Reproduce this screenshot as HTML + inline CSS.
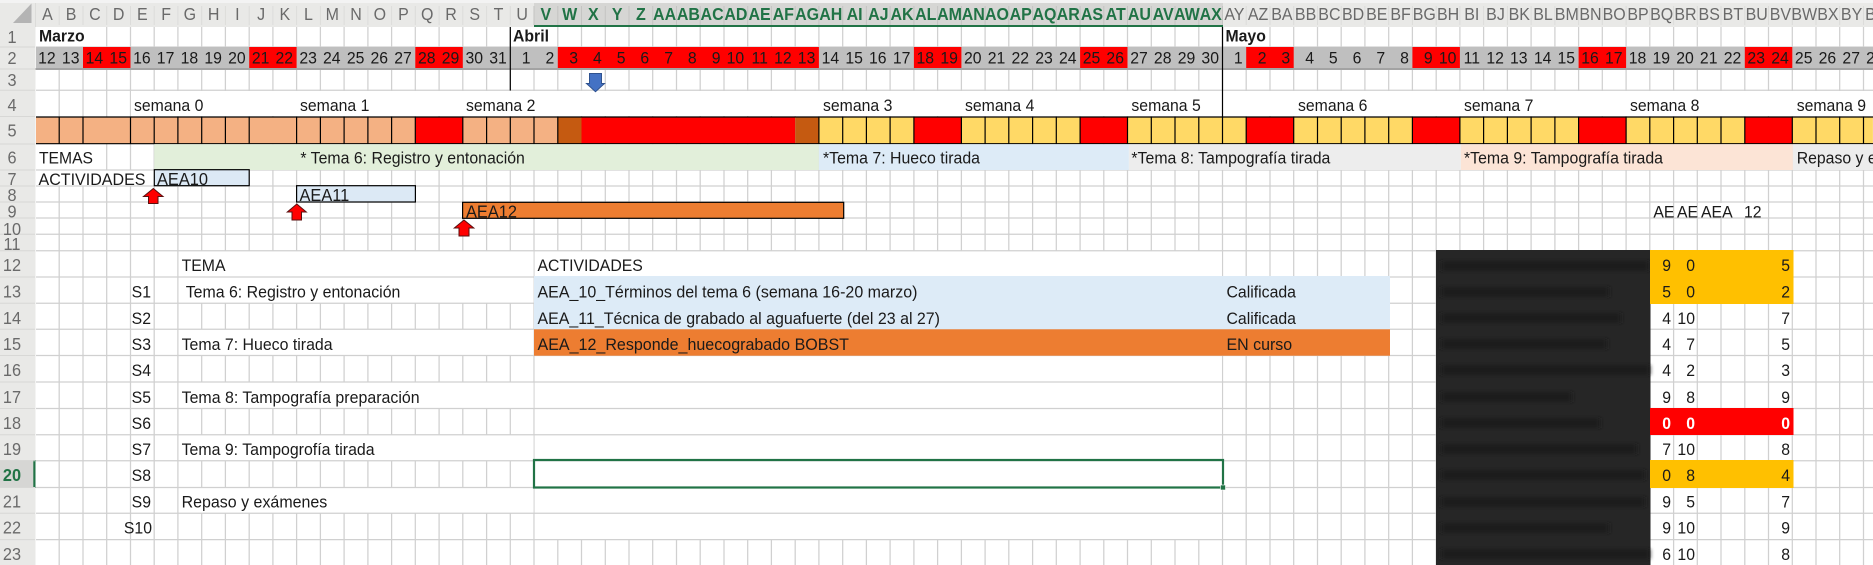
<!DOCTYPE html>
<html lang="es"><head><meta charset="utf-8"><title>Planificación</title>
<style>
html,body{margin:0;padding:0;background:#fff;width:1873px;height:565px;overflow:hidden}
svg{display:block;position:absolute;left:0;top:0}
text{font-family:"Liberation Sans",Arial,sans-serif;font-size:15.8px;fill:#1a1a1a}
.h text{font-size:16px;fill:#6a6a6a;text-anchor:middle}
.hs text{font-size:16px;fill:#217346;font-weight:bold;text-anchor:middle}
.r text{font-size:16.3px;fill:#6a6a6a;text-anchor:middle}
.e text{text-anchor:end}
</style></head><body>
<svg width="1873" height="565" viewBox="0 0 1873 565" xmlns="http://www.w3.org/2000/svg">
<defs><filter id="b" x="-10%" y="-100%" width="120%" height="300%"><feGaussianBlur stdDeviation="2 1.6"/></filter></defs>
<rect width="1873" height="565" fill="#fff"/>

<!-- grid -->
<path fill="none" stroke="#d0d0d0" stroke-width="1.25" d="M59.2 27V565M83 27V565M106.7 27V565M130.5 27V565M154.2 27V565M177.9 27V565M201.7 27V565M225.4 27V565M249.2 27V565M272.9 27V565M296.6 27V565M320.4 27V565M344.1 27V565M367.9 27V565M391.6 27V565M415.3 27V565M439.1 27V565M462.8 27V565M486.6 27V565M510.3 27V565M534 27V565M557.8 27V565M581.5 27V565M605.3 27V565M629 27V565M652.7 27V565M676.5 27V565M700.2 27V565M724 27V565M747.7 27V565M771.4 27V565M795.2 27V565M818.9 27V565M842.7 27V565M866.4 27V565M890.1 27V565M913.9 27V565M937.6 27V565M961.4 27V565M985.1 27V565M1008.8 27V565M1032.6 27V565M1056.3 27V565M1080.1 27V565M1103.8 27V565M1127.5 27V565M1151.3 27V565M1175 27V565M1198.8 27V565M1222.5 27V565M1246.2 27V565M1270 27V565M1293.7 27V565M1317.5 27V565M1341.2 27V565M1364.9 27V565M1388.7 27V565M1412.4 27V565M1436.2 27V565M1459.9 27V565M1483.6 27V565M1507.4 27V565M1531.1 27V565M1554.9 27V565M1578.6 27V565M1602.3 27V565M1626.1 27V565M1649.8 27V565M1673.6 27V565M1697.3 27V565M1721 27V565M1744.8 27V565M1768.5 27V565M1792.3 27V565M1816 27V565M1839.7 27V565M1863.5 27V565"/>

<!-- white covers for overflowing / merged cells -->
<g fill="#fff">
<rect x="36" y="27" width="70" height="20"/>
<rect x="511" y="27" width="46" height="20"/>
<rect x="1224" y="27" width="45" height="20"/>
<rect x="131" y="91" width="1742" height="25"/>
<rect x="36" y="144" width="70" height="26"/>
<rect x="36" y="170" width="118" height="16"/>
<rect x="1698" y="203" width="70" height="15"/>
<rect x="534.7" y="251" width="687.2" height="289"/>
<rect x="178.6" y="251" width="355" height="52"/>
<rect x="178.6" y="329" width="355" height="27"/>
<rect x="178.6" y="382" width="355" height="26.5"/>
<rect x="178.6" y="434.5" width="355" height="26"/>
<rect x="178.6" y="487.5" width="355" height="26"/>
</g>
<path fill="none" stroke="#d0d0d0" stroke-width="1.25" d="M36 47H1873M36 90.3H1873M36 170H1873M36 186H1873M36 202H1873M36 218H1873M36 234.3H1873M36 250.7H1873M36 277H1873M36 303.3H1873M36 329.3H1873M36 355.5H1873M36 382H1873M36 408.5H1873M36 434.7H1873M36 460.7H1873M36 487.5H1873M36 513.3H1873M36 539.6H1873"/>

<!-- row 2 band -->
<rect x="36" y="47" width="1837" height="21" fill="#bfbfbf"/>
<g fill="#f00">
<rect x="83" y="47" width="47.5" height="21"/>
<rect x="249.2" y="47" width="47.4" height="21"/>
<rect x="415.3" y="47" width="47.5" height="21"/>
<rect x="557.8" y="47" width="261.1" height="21"/>
<rect x="913.9" y="47" width="47.5" height="21"/>
<rect x="1080.1" y="47" width="47.4" height="21"/>
<rect x="1246.2" y="47" width="47.5" height="21"/>
<rect x="1412.4" y="47" width="47.5" height="21"/>
<rect x="1578.6" y="47" width="47.5" height="21"/>
<rect x="1744.8" y="47" width="47.5" height="21"/>
</g>
<rect x="0" y="68" width="1873" height="2" fill="#a3a3a3"/>

<!-- row 5 -->
<rect x="36" y="117" width="379.3" height="27" fill="#f4b183"/>
<rect x="415.3" y="117" width="47.5" height="27" fill="#f00"/>
<rect x="462.8" y="117" width="95" height="27" fill="#f4b183"/>
<rect x="557.8" y="117" width="23.7" height="27" fill="#c55a11"/>
<rect x="581.5" y="117" width="213.7" height="27" fill="#f00"/>
<rect x="795.2" y="117" width="23.7" height="27" fill="#c55a11"/>
<rect x="818.9" y="117" width="1054" height="27" fill="#ffd966"/>
<g fill="#f00">
<rect x="913.9" y="117" width="47.5" height="27"/>
<rect x="1080.1" y="117" width="47.4" height="27"/>
<rect x="1246.2" y="117" width="47.5" height="27"/>
<rect x="1412.4" y="117" width="47.5" height="27"/>
<rect x="1578.6" y="117" width="47.5" height="27"/>
<rect x="1744.8" y="117" width="47.5" height="27"/>
</g>
<path fill="none" stroke="#000" stroke-width="1.2" d="M36 117H1873M36 143.7H1873M59.2 117V144M83 117V144M130.5 117V144M154.2 117V144M177.9 117V144M201.7 117V144M225.4 117V144M249.2 117V144M296.6 117V144M320.4 117V144M344.1 117V144M367.9 117V144M391.6 117V144M415.3 117V144M462.8 117V144M486.6 117V144M510.3 117V144M534 117V144M557.8 117V144M818.9 117V144M842.7 117V144M866.4 117V144M890.1 117V144M913.9 117V144M961.4 117V144M985.1 117V144M1008.8 117V144M1032.6 117V144M1056.3 117V144M1080.1 117V144M1127.5 117V144M1151.3 117V144M1175 117V144M1198.8 117V144M1222.5 117V144M1246.2 117V144M1293.7 117V144M1317.5 117V144M1341.2 117V144M1364.9 117V144M1388.7 117V144M1412.4 117V144M1459.9 117V144M1483.6 117V144M1507.4 117V144M1531.1 117V144M1554.9 117V144M1578.6 117V144M1626.1 117V144M1649.8 117V144M1673.6 117V144M1697.3 117V144M1721 117V144M1744.8 117V144M1792.3 117V144M1816 117V144M1839.7 117V144M1863.5 117V144"/>

<!-- month lines -->
<path fill="none" stroke="#000" stroke-width="1.2" d="M510.3 27V90.5M1222.5 27V117"/>

<!-- row 6 bands -->
<rect x="154.2" y="144.2" width="664.7" height="25.8" fill="#e2efda"/>
<rect x="818.9" y="144.2" width="310" height="25.8" fill="#ddebf7"/>
<rect x="1128.9" y="144.2" width="332" height="25.8" fill="#ededed"/>
<rect x="1460.9" y="144.2" width="332" height="25.8" fill="#fce4d6"/>
<rect x="1792.9" y="144.2" width="81" height="25.8" fill="#ededed"/>

<!-- activity bars -->
<rect x="154.3" y="169.7" width="94.9" height="16" fill="#dce9f5" stroke="#000" stroke-width="1.2"/>
<rect x="296.6" y="185.7" width="118.8" height="16.3" fill="#dce9f5" stroke="#000" stroke-width="1.2"/>
<rect x="462.6" y="202.3" width="381.1" height="16" fill="#ed7d31" stroke="#000" stroke-width="1.2"/>

<!-- arrows -->
<g fill="#f00" stroke="#5a0f0f" stroke-width="1">
<path d="M153.3 188.5L163 196.5H158V203.5H148.5V196.5H143.5Z"/>
<path d="M296.8 204L306.3 212H301.5V220H292V212H287.3Z"/>
<path d="M464 220L473.8 228H469V236H459V228H454.3Z"/>
</g>
<path d="M589.5 73.5H601.5V83.5H604.5L595.5 91.7L586.5 83.5H589.5Z" fill="#4472c4" stroke="#2f528f" stroke-width="1"/>

<!-- table fills -->
<rect x="534" y="276" width="856" height="53.3" fill="#ddebf7"/>
<rect x="534" y="329.3" width="856" height="26.4" fill="#ed7d31"/>

<!-- dark block -->
<rect x="1436" y="250" width="214.5" height="315" fill="#262626"/>
<g fill="#1b1b1b" filter="url(#b)">
<rect x="1441" y="261" width="208" height="10"/>
<rect x="1441" y="287" width="168" height="10"/>
<rect x="1441" y="313" width="180" height="10"/>
<rect x="1441" y="339" width="166" height="10"/>
<rect x="1441" y="365" width="209" height="10"/>
<rect x="1441" y="392" width="131" height="10"/>
<rect x="1441" y="418" width="159" height="10"/>
<rect x="1441" y="444" width="196" height="10"/>
<rect x="1441" y="470" width="204" height="10"/>
<rect x="1441" y="497" width="204" height="10"/>
<rect x="1441" y="523" width="168" height="10"/>
<rect x="1441" y="549" width="209" height="10"/>
</g>
<!-- score fills -->
<rect x="1650" y="250" width="143.5" height="54" fill="#ffc000"/>
<rect x="1650" y="460" width="143.5" height="28" fill="#ffc000"/>
<rect x="1650" y="408" width="143.5" height="27" fill="#f00"/>

<!-- selection -->
<rect x="534" y="460" width="689" height="27.5" fill="none" stroke="#217346" stroke-width="2.2"/>
<rect x="1220.5" y="485" width="5" height="5" fill="#217346" stroke="#fff" stroke-width=".6"/>

<!-- headers -->
<rect x="0" y="3" width="1873" height="24" fill="#e9e9e7"/>
<rect x="0" y="0" width="1873" height="3" fill="#f3f3f3"/>
<rect x="534" y="3" width="689" height="24" fill="#d6d6d4"/>
<rect x="534" y="25" width="689" height="2" fill="#217346"/>
<rect x="0" y="27" width="35.5" height="538" fill="#e9e9e7"/>
<rect x="0" y="460" width="35.5" height="28" fill="#d6d6d4"/>
<rect x="33.3" y="460" width="2.2" height="28" fill="#217346"/>
<path d="M31.5 3.5V23H13Z" fill="#b4b4b4"/>
<path fill="none" stroke="#dcdcda" stroke-width="1" d="M35.5 3V27M59.2 6V25M83 6V25M106.7 6V25M130.5 6V25M154.2 6V25M177.9 6V25M201.7 6V25M225.4 6V25M249.2 6V25M272.9 6V25M296.6 6V25M320.4 6V25M344.1 6V25M367.9 6V25M391.6 6V25M415.3 6V25M439.1 6V25M462.8 6V25M486.6 6V25M510.3 6V25M1246.2 6V25M1270 6V25M1293.7 6V25M1317.5 6V25M1341.2 6V25M1364.9 6V25M1388.7 6V25M1412.4 6V25M1436.2 6V25M1459.9 6V25M1483.6 6V25M1507.4 6V25M1531.1 6V25M1554.9 6V25M1578.6 6V25M1602.3 6V25M1626.1 6V25M1649.8 6V25M1673.6 6V25M1697.3 6V25M1721 6V25M1744.8 6V25M1768.5 6V25M1792.3 6V25M1816 6V25M1839.7 6V25M1863.5 6V25"/>
<path fill="none" stroke="#c4c4c2" stroke-width="1" d="M534 6V25M557.8 6V25M581.5 6V25M605.3 6V25M629 6V25M652.7 6V25M676.5 6V25M700.2 6V25M724 6V25M747.7 6V25M771.4 6V25M795.2 6V25M818.9 6V25M842.7 6V25M866.4 6V25M890.1 6V25M913.9 6V25M937.6 6V25M961.4 6V25M985.1 6V25M1008.8 6V25M1032.6 6V25M1056.3 6V25M1080.1 6V25M1103.8 6V25M1127.5 6V25M1151.3 6V25M1175 6V25M1198.8 6V25M1222.5 6V25"/>
<path fill="none" stroke="#d8d8d6" stroke-width="1" d="M0 47H35M0 69H35M0 90.3H35M0 116.5H35M0 144H35M0 170H35M0 186H35M0 202H35M0 218H35M0 234.3H35M0 250.7H35M0 277H35M0 303.3H35M0 329.3H35M0 355.5H35M0 382H35M0 408.5H35M0 434.7H35M0 460.7H35M0 487.5H35M0 513.3H35M0 539.6H35"/>

<!-- all text, slightly stretched vertically like the source -->
<g transform="scale(1 1.07)">
<g class="h">
<text x="47.4" y="18.7">A</text><text x="71.1" y="18.7">B</text><text x="94.9" y="18.7">C</text><text x="118.6" y="18.7">D</text><text x="142.4" y="18.7">E</text><text x="166.1" y="18.7">F</text><text x="189.8" y="18.7">G</text><text x="213.6" y="18.7">H</text><text x="237.3" y="18.7">I</text><text x="261.1" y="18.7">J</text><text x="284.8" y="18.7">K</text><text x="308.5" y="18.7">L</text><text x="332.3" y="18.7">M</text><text x="356" y="18.7">N</text><text x="379.8" y="18.7">O</text><text x="403.5" y="18.7">P</text><text x="427.2" y="18.7">Q</text><text x="451" y="18.7">R</text><text x="474.7" y="18.7">S</text><text x="498.5" y="18.7">T</text><text x="522.2" y="18.7">U</text>
<text x="1234.4" y="18.7">AY</text><text x="1258.1" y="18.7">AZ</text><text x="1281.9" y="18.7">BA</text><text x="1305.6" y="18.7">BB</text><text x="1329.4" y="18.7">BC</text><text x="1353.1" y="18.7">BD</text><text x="1376.8" y="18.7">BE</text><text x="1400.6" y="18.7">BF</text><text x="1424.3" y="18.7">BG</text><text x="1448.1" y="18.7">BH</text><text x="1471.8" y="18.7">BI</text><text x="1495.5" y="18.7">BJ</text><text x="1519.3" y="18.7">BK</text><text x="1543" y="18.7">BL</text><text x="1566.8" y="18.7">BM</text><text x="1590.5" y="18.7">BN</text><text x="1614.2" y="18.7">BO</text><text x="1638" y="18.7">BP</text><text x="1661.7" y="18.7">BQ</text><text x="1685.5" y="18.7">BR</text><text x="1709.2" y="18.7">BS</text><text x="1732.9" y="18.7">BT</text><text x="1756.7" y="18.7">BU</text><text x="1780.4" y="18.7">BV</text><text x="1804.2" y="18.7">BW</text><text x="1827.9" y="18.7">BX</text><text x="1851.6" y="18.7">BY</text><text x="1875.4" y="18.7">BZ</text>
</g>
<g class="hs">
<text x="545.9" y="18.7">V</text><text x="569.7" y="18.7">W</text><text x="593.4" y="18.7">X</text><text x="617.2" y="18.7">Y</text><text x="640.9" y="18.7">Z</text><text x="664.6" y="18.7">AA</text><text x="688.4" y="18.7">AB</text><text x="712.1" y="18.7">AC</text><text x="735.9" y="18.7">AD</text><text x="759.6" y="18.7">AE</text><text x="783.3" y="18.7">AF</text><text x="807.1" y="18.7">AG</text><text x="830.8" y="18.7">AH</text><text x="854.6" y="18.7">AI</text><text x="878.3" y="18.7">AJ</text><text x="902" y="18.7">AK</text><text x="925.8" y="18.7">AL</text><text x="949.5" y="18.7">AM</text><text x="973.3" y="18.7">AN</text><text x="997" y="18.7">AO</text><text x="1020.7" y="18.7">AP</text><text x="1044.5" y="18.7">AQ</text><text x="1068.2" y="18.7">AR</text><text x="1092" y="18.7">AS</text><text x="1115.7" y="18.7">AT</text><text x="1139.4" y="18.7">AU</text><text x="1163.2" y="18.7">AV</text><text x="1186.9" y="18.7">AW</text><text x="1210.7" y="18.7">AX</text>
</g>
<g class="r">
<text x="12" y="40.2">1</text><text x="12" y="59.8">2</text><text x="12" y="80.4">3</text><text x="12" y="103.7">4</text><text x="12" y="127.8">5</text><text x="12" y="152.8">6</text><text x="12" y="172.9">7</text><text x="12" y="187.9">8</text><text x="12" y="203.1">9</text><text x="12" y="219.6">10</text><text x="12" y="233.6">11</text><text x="12" y="253.5">12</text><text x="12" y="278">13</text><text x="12" y="302.8">14</text><text x="12" y="327.1">15</text><text x="12" y="351.4">16</text><text x="12" y="376.6">17</text><text x="12" y="400.9">18</text><text x="12" y="425.2">19</text>
<text x="12" y="449.5" style="fill:#217346;font-weight:bold">20</text>
<text x="12" y="474.5">21</text><text x="12" y="498.8">22</text><text x="12" y="523.4">23</text>
</g>
<text x="39" y="39" style="font-weight:bold">Marzo</text>
<text x="513" y="39" style="font-weight:bold">Abril</text>
<text x="1225.5" y="39" style="font-weight:bold">Mayo</text>

<g class="e">
<text x="55.7" y="59.2">12</text><text x="79.5" y="59.2">13</text><text x="103.2" y="59.2">14</text><text x="127" y="59.2">15</text><text x="150.7" y="59.2">16</text><text x="174.4" y="59.2">17</text><text x="198.2" y="59.2">18</text><text x="221.9" y="59.2">19</text><text x="245.7" y="59.2">20</text><text x="269.4" y="59.2">21</text><text x="293.1" y="59.2">22</text><text x="316.9" y="59.2">23</text><text x="340.6" y="59.2">24</text><text x="364.4" y="59.2">25</text><text x="388.1" y="59.2">26</text><text x="411.8" y="59.2">27</text><text x="435.6" y="59.2">28</text><text x="459.3" y="59.2">29</text><text x="483.1" y="59.2">30</text><text x="506.8" y="59.2">31</text><text x="530.5" y="59.2">1</text><text x="554.3" y="59.2">2</text><text x="578" y="59.2">3</text><text x="601.8" y="59.2">4</text><text x="625.5" y="59.2">5</text><text x="649.2" y="59.2">6</text><text x="673" y="59.2">7</text><text x="696.7" y="59.2">8</text><text x="720.5" y="59.2">9</text><text x="744.2" y="59.2">10</text><text x="767.9" y="59.2">11</text><text x="791.7" y="59.2">12</text><text x="815.4" y="59.2">13</text><text x="839.2" y="59.2">14</text><text x="862.9" y="59.2">15</text><text x="886.6" y="59.2">16</text><text x="910.4" y="59.2">17</text><text x="934.1" y="59.2">18</text><text x="957.9" y="59.2">19</text><text x="981.6" y="59.2">20</text><text x="1005.3" y="59.2">21</text><text x="1029.1" y="59.2">22</text><text x="1052.8" y="59.2">23</text><text x="1076.6" y="59.2">24</text><text x="1100.3" y="59.2">25</text><text x="1124" y="59.2">26</text><text x="1147.8" y="59.2">27</text><text x="1171.5" y="59.2">28</text><text x="1195.3" y="59.2">29</text><text x="1219" y="59.2">30</text><text x="1242.7" y="59.2">1</text><text x="1266.5" y="59.2">2</text><text x="1290.2" y="59.2">3</text><text x="1314" y="59.2">4</text><text x="1337.7" y="59.2">5</text><text x="1361.4" y="59.2">6</text><text x="1385.2" y="59.2">7</text><text x="1408.9" y="59.2">8</text><text x="1432.7" y="59.2">9</text><text x="1456.4" y="59.2">10</text><text x="1480.1" y="59.2">11</text><text x="1503.9" y="59.2">12</text><text x="1527.6" y="59.2">13</text><text x="1551.4" y="59.2">14</text><text x="1575.1" y="59.2">15</text><text x="1598.8" y="59.2">16</text><text x="1622.6" y="59.2">17</text><text x="1646.3" y="59.2">18</text><text x="1670.1" y="59.2">19</text><text x="1693.8" y="59.2">20</text><text x="1717.5" y="59.2">21</text><text x="1741.3" y="59.2">22</text><text x="1765" y="59.2">23</text><text x="1788.8" y="59.2">24</text><text x="1812.5" y="59.2">25</text><text x="1836.2" y="59.2">26</text><text x="1860" y="59.2">27</text><text x="1883.7" y="59.2">28</text>
</g>

<text x="134" y="103.7">semana 0</text><text x="300" y="103.7">semana 1</text><text x="466" y="103.7">semana 2</text><text x="823" y="103.7">semana 3</text><text x="965" y="103.7">semana 4</text><text x="1131.4" y="103.7">semana 5</text><text x="1298" y="103.7">semana 6</text><text x="1464" y="103.7">semana 7</text><text x="1630" y="103.7">semana 8</text><text x="1796.7" y="103.7">semana 9</text>

<text x="39" y="152.8" textLength="54" lengthAdjust="spacingAndGlyphs">TEMAS</text>
<text x="300.4" y="152.8" textLength="224.5" lengthAdjust="spacingAndGlyphs">* Tema 6: Registro y entonación</text>
<text x="823" y="152.8" textLength="157" lengthAdjust="spacingAndGlyphs">*Tema 7: Hueco tirada</text>
<text x="1131.4" y="152.8" textLength="199" lengthAdjust="spacingAndGlyphs">*Tema 8: Tampografía tirada</text>
<text x="1464" y="152.8" textLength="199" lengthAdjust="spacingAndGlyphs">*Tema 9: Tampografía tirada</text>
<text x="1796.7" y="152.8">Repaso y exámenes</text>

<text x="38.5" y="172.9" textLength="107" lengthAdjust="spacingAndGlyphs">ACTIVIDADES</text>
<text x="157" y="172.9" style="font-size:16.4px">AEA10</text>
<text x="299.5" y="187.9" style="font-size:16.4px">AEA11</text>
<text x="466" y="203.1" style="font-size:16.4px">AEA12</text>

<text x="1653.4" y="203.1">AE</text><text x="1677" y="203.1">AE</text><text x="1701" y="203.1">AEA</text><text x="1744" y="203.1">12</text>

<text x="181.6" y="253.5">TEMA</text>
<text x="537.5" y="253.5">ACTIVIDADES</text>

<text x="185.7" y="278" textLength="214.7" lengthAdjust="spacingAndGlyphs">Tema 6: Registro y entonación</text>
<text x="181.6" y="327.1" textLength="151" lengthAdjust="spacingAndGlyphs">Tema 7: Hueco tirada</text>
<text x="181.6" y="376.6" textLength="238" lengthAdjust="spacingAndGlyphs">Tema 8: Tampografía preparación</text>
<text x="181.6" y="425.2" textLength="193" lengthAdjust="spacingAndGlyphs">Tema 9: Tampogrofía tirada</text>
<text x="181.6" y="474.5" textLength="145.7" lengthAdjust="spacingAndGlyphs">Repaso y exámenes</text>

<text x="537.5" y="278" textLength="380" lengthAdjust="spacingAndGlyphs">AEA_10_Términos del tema 6 (semana 16-20 marzo)</text>
<text x="537.5" y="302.8" textLength="402.5" lengthAdjust="spacingAndGlyphs">AEA_11_Técnica de grabado al aguafuerte (del 23 al 27)</text>
<text x="537.5" y="327.1" textLength="311.5" lengthAdjust="spacingAndGlyphs">AEA_12_Responde_huecograbado BOBST</text>
<text x="1226.5" y="278" textLength="69.5" lengthAdjust="spacingAndGlyphs">Calificada</text>
<text x="1226.5" y="302.8" textLength="69.5" lengthAdjust="spacingAndGlyphs">Calificada</text>
<text x="1226.5" y="327.1" textLength="65.7" lengthAdjust="spacingAndGlyphs">EN curso</text>

<g class="e">
<text x="151" y="278">S1</text><text x="151" y="302.8">S2</text><text x="151" y="327.1">S3</text><text x="151" y="351.4">S4</text><text x="151" y="376.6">S5</text><text x="151" y="400.9">S6</text><text x="151" y="425.2">S7</text><text x="151" y="449.5">S8</text><text x="151" y="474.5">S9</text><text x="152" y="498.8">S10</text>

<text x="1671" y="253.5">9</text><text x="1695" y="253.5">0</text><text x="1790" y="253.5">5</text>
<text x="1671" y="278">5</text><text x="1695" y="278">0</text><text x="1790" y="278">2</text>
<text x="1671" y="302.8">4</text><text x="1695" y="302.8">10</text><text x="1790" y="302.8">7</text>
<text x="1671" y="327.1">4</text><text x="1695" y="327.1">7</text><text x="1790" y="327.1">5</text>
<text x="1671" y="351.4">4</text><text x="1695" y="351.4">2</text><text x="1790" y="351.4">3</text>
<text x="1671" y="376.6">9</text><text x="1695" y="376.6">8</text><text x="1790" y="376.6">9</text>
<text x="1671" y="400.9" style="fill:#fff;font-weight:bold">0</text><text x="1695" y="400.9" style="fill:#fff;font-weight:bold">0</text><text x="1790" y="400.9" style="fill:#fff;font-weight:bold">0</text>
<text x="1671" y="425.2">7</text><text x="1695" y="425.2">10</text><text x="1790" y="425.2">8</text>
<text x="1671" y="449.5">0</text><text x="1695" y="449.5">8</text><text x="1790" y="449.5">4</text>
<text x="1671" y="474.5">9</text><text x="1695" y="474.5">5</text><text x="1790" y="474.5">7</text>
<text x="1671" y="498.8">9</text><text x="1695" y="498.8">10</text><text x="1790" y="498.8">9</text>
<text x="1671" y="523.4">6</text><text x="1695" y="523.4">10</text><text x="1790" y="523.4">8</text>
</g>
</g>
</svg>
</body></html>
